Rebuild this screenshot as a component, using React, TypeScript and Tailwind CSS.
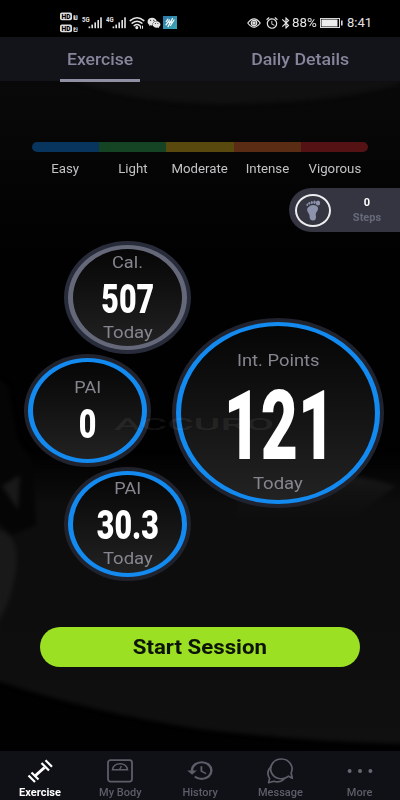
import type { ReactNode } from 'react';
import { MdAlarm, MdBluetooth, MdHistory } from 'react-icons/md';
import { FaWeixin } from 'react-icons/fa';

function Backdrop() {
  return (
    <svg className="absolute inset-0 -z-10" width="400" height="800" viewBox="0 0 400 800" aria-hidden="true">
      <defs>
        <linearGradient id="floor" x1="0" y1="0" x2="0" y2="1">
          <stop offset="0" stopColor="#0d0d0d" stopOpacity="0" />
          <stop offset="0.18" stopColor="#0d0d0d" />
          <stop offset="0.5" stopColor="#0d0d0d" />
          <stop offset="1" stopColor="#101010" />
        </linearGradient>
        <linearGradient id="top" x1="0" y1="0" x2="0" y2="1">
          <stop offset="0" stopColor="#090909" />
          <stop offset="1" stopColor="#010101" />
        </linearGradient>
        <linearGradient id="glow" x1="0" y1="0" x2="0" y2="1">
          <stop offset="0" stopColor="#1c1c1c" />
          <stop offset="1" stopColor="#0d0d0d" stopOpacity="0" />
        </linearGradient>
        <filter id="soft" x="-20%" y="-20%" width="140%" height="140%" colorInterpolationFilters="sRGB">
          <feGaussianBlur stdDeviation="2" />
        </filter>
      </defs>
      <rect width="400" height="800" fill="#010101" />
      <rect y="80" width="400" height="170" fill="url(#top)" />
      <path d="M70 78H400V84Q330 104 220 104Q120 102 70 78Z" fill="#101010" filter="url(#soft)" />
      <g filter="url(#soft)">
        <path d="M-5 450L200 455L405 452V744Q310 742 200 729Q90 712 -5 680Z" fill="url(#floor)" />
        <path d="M250 474Q330 466 396 486L340 526L230 530Z" fill="url(#glow)" />
        <path d="M-5 376L8 386L18 440L32 460L36 525L12 535L-5 520Z" fill="#050505" />
        <path d="M2 486L20 475L18 510Z" fill="#191919" />
        <path d="M-5 530Q16 530 17 560Q14 600 -5 626Z" fill="#191919" />
      </g>
    </svg>
  );
}

function Signal({ label }: { label: string }) {
  return (
    <svg width="21" height="14" viewBox="0 0 21 14" fill="#e4e4e4">
      <text x="0" y="6.4" fontSize="7" fontWeight="700" fontFamily="Roboto, sans-serif" textLength="7.6" lengthAdjust="spacingAndGlyphs">{label}</text>
      <rect x="6.6" y="10.5" width="1.6" height="1.7" />
      <rect x="9.4" y="8.6" width="1.6" height="3.6" />
      <rect x="12.4" y="6.4" width="1.6" height="5.8" />
      <rect x="15.4" y="4" width="1.6" height="8.2" />
      <rect x="18.2" y="1.3" width="1.6" height="10.9" />
    </svg>
  );
}

function HdBadge({ sim }: { sim: string }) {
  return (
    <svg width="19" height="9" viewBox="0 0 19 9" fontFamily="Roboto, sans-serif" fontWeight="900">
      <rect x="0" y="0.6" width="12" height="7.6" rx="1.8" fill="#dedede" />
      <text x="1.6" y="7" fontSize="7.2" fill="#000" textLength="9" lengthAdjust="spacingAndGlyphs">HD</text>
      <rect x="13.4" y="3" width="4.2" height="5" rx="1" fill="#d0d0d0" />
      <text x="14.3" y="7.3" fontSize="5" fill="#000">{sim}</text>
    </svg>
  );
}

function StatusBar() {
  return (
    <div className="flex h-[37px] items-start bg-black pl-[60px] text-[#e4e4e4]">
      <div className="mt-3 flex w-[19px] flex-col gap-[3px]">
        <HdBadge sim="1" />
        <HdBadge sim="2" />
      </div>
      <div className="mt-4 ml-[3px] flex gap-[3px]">
        <Signal label="5G" />
        <Signal label="4G" />
      </div>
      <svg className="mt-4 ml-[2px]" width="16" height="14" viewBox="0 0 16 14" fill="none" stroke="#e4e4e4" strokeWidth="1.5" strokeLinecap="round">
        <path d="M1.2 4.6Q8 -1 14.8 4.6M3.2 7.2Q8 3.3 12.8 7.2M5.2 9.6Q8 7.4 10.8 9.6" />
        <circle cx="7.8" cy="11.6" r="0.8" fill="#e4e4e4" />
        <path d="M11.5 10v2.2M13.5 10v2.2" strokeWidth="1.1" />
      </svg>
      <FaWeixin className="mt-[17px] ml-[2px] h-[12px] w-[14px]" />
      <svg className="mt-4 ml-[2px]" width="14" height="13" viewBox="0 0 14 13">
        <defs>
          <linearGradient id="app" x1="0" y1="0" x2="1" y2="1">
            <stop offset="0" stopColor="#2c78a8" />
            <stop offset="1" stopColor="#3ba8b4" />
          </linearGradient>
        </defs>
        <rect width="14" height="13" fill="url(#app)" />
        <path d="M3 8.8L6.5 4M5 10.6L9.5 2.5M7.5 9.5L11 4M3.2 5.5L5 3.2M5.4 6.2H9.6" stroke="#fff" strokeWidth="1.2" strokeLinecap="round" fill="none" />
      </svg>
      <svg className="mt-[18px] ml-[70px]" width="14" height="10" viewBox="0 0 14 10" fill="none" stroke="#e4e4e4" strokeWidth="1.2">
        <path d="M0.8 5Q7 -3.4 13.2 5Q7 13.4 0.8 5Z" />
        <circle cx="7" cy="5" r="2.7" />
        <circle cx="7" cy="5" r="1.1" fill="#e4e4e4" />
      </svg>
      <MdAlarm className="mt-4 ml-[4px] h-[14px] w-[14px]" />
      <MdBluetooth className="mt-4 h-[14px] w-[14px] shrink-0" />
      <span className="mt-[15px] -ml-px w-6 origin-left scale-x-[1.03] font-['Roboto',sans-serif] text-[13px] leading-4">88%</span>
      <svg className="mt-[18px] ml-1 shrink-0" width="23" height="10" viewBox="0 0 23 10">
        <rect x="0.5" y="0.5" width="19" height="9" fill="none" stroke="#d8d8d8" />
        <rect x="1.5" y="1.5" width="16" height="7" fill="#ececec" />
        <rect x="21" y="2.5" width="1.6" height="5" fill="#d8d8d8" />
      </svg>
      <span className="mt-[15px] ml-1 font-['Roboto',sans-serif] text-[13px] leading-4">8:41</span>
    </div>
  );
}

function Tabs() {
  return (
    <div className="grid h-11 grid-cols-2 bg-[#131419] text-center text-base font-medium text-[#85869c]">
      <div className="relative leading-[45px]">
        <span className="inline-block scale-x-[1.1]">Exercise</span>
        <span className="absolute inset-x-[60px] bottom-0 h-[3px] bg-[#8f90a3]" />
      </div>
      <div className="leading-[45px]">
        <span className="inline-block scale-x-[1.11]">Daily Details</span>
      </div>
    </div>
  );
}

const zones = [
  { name: 'Easy', color: 'bg-[#08355e]' },
  { name: 'Light', color: 'bg-[#154425]' },
  { name: 'Moderate', color: 'bg-[#59490e]' },
  { name: 'Intense', color: 'bg-[#5a2c14]' },
  { name: 'Vigorous', color: 'bg-[#551214]' },
];

function Zones() {
  return (
    <div className="mx-8 mt-[61px]">
      <div className="flex h-[10px] overflow-hidden rounded-full">
        {zones.map((z) => <div key={z.name} className={`flex-1 ${z.color}`} />)}
      </div>
      <div className="mt-2 grid h-[18px] grid-cols-5 text-center text-[12.5px] leading-[17px] text-[#c3c3c6]">
        {zones.map((z) => (
          <div key={z.name}><span className="inline-block scale-x-[1.06]">{z.name}</span></div>
        ))}
      </div>
    </div>
  );
}

function Steps() {
  return (
    <div className="mt-[10px] ml-[289px] flex h-11 items-center rounded-l-full bg-[#343541] pl-[6px]">
      <div className="flex h-[33px] w-9 shrink-0 items-center justify-center rounded-[50%] border-2 border-[#ededf0]">
        <svg width="16" height="21" viewBox="0 0 16 21" fill="#8d93ac">
          <ellipse cx="13" cy="3" rx="2.2" ry="2.5" />
          <ellipse cx="9.5" cy="2.2" rx="1.2" ry="1.7" />
          <ellipse cx="6.8" cy="2.5" rx="1.1" ry="1.5" />
          <ellipse cx="4.3" cy="3.3" rx="1" ry="1.4" />
          <ellipse cx="2.3" cy="4.7" rx="0.9" ry="1.2" />
          <path d="M3 7.4Q6 4.6 9.5 5.2Q13.5 6 13 9.3Q12.4 11.5 11 13Q10.4 14.5 11 16.5Q11.2 20.3 8.2 20.5Q5 20.6 4.7 17.5Q4.7 14.5 3 12.2Q1.2 9.2 3 7.4Z" />
        </svg>
      </div>
      <div className="flex flex-1 flex-col pr-[2px] pl-[5px] text-center text-[10px] leading-[15px] font-bold">
        <span className="scale-x-110 text-white">0</span>
        <span className="scale-x-[1.1] text-[#686a7b]">Steps</span>
      </div>
    </div>
  );
}

function Bubble({ shape, ring, children }: { shape: string; ring: string; children: ReactNode }) {
  return (
    <div className={`relative flex flex-col items-center rounded-[50%] text-[17px] leading-5 text-[#85868f] ${shape}`}>
      <div className={`absolute inset-0 -z-10 rounded-[50%] p-1 ${ring === 'gray' ? 'bg-[#282b39]' : 'bg-[#20232e]'}`}>
        <div
          className={`h-full w-full rounded-[50%] border-x-[5px] border-y-4 bg-linear-to-b from-[#060606] to-[#232323] bg-origin-border ${
            ring === 'gray' ? 'border-[#656879]' : 'border-[#128af0]'
          }`}
        />
      </div>
      {children}
    </div>
  );
}

function Bubbles() {
  return (
    <div className="relative z-0 mt-[9px] flex h-[341px] items-start pl-6">
      <svg className="absolute top-[172px] left-[114px]" width="162" height="22" viewBox="0 0 162 22">
        <text x="0" y="17" fontSize="16" fontWeight="500" fontFamily="Roboto, sans-serif" fill="#ffffff" fillOpacity="0.08" textLength="160" lengthAdjust="spacingAndGlyphs">ACCURO</text>
      </svg>
      <div className="flex w-[167px] shrink-0 flex-col">
        <Bubble ring="gray" shape="h-[113px] w-[127px] ml-10 pt-[11px]">
          <span className="scale-x-[1.07]">Cal.</span>
          <span className="h-[50px] scale-x-[0.76] text-[40px] leading-[55px] font-black text-white">507</span>
          <span className="scale-x-[1.09]">Today</span>
        </Bubble>
        <Bubble ring="blue" shape="h-[113px] w-[127px] pt-[23px]">
          <span className="scale-x-[1.06]">PAI</span>
          <span className="h-[50px] scale-x-[0.76] text-[40px] leading-[55px] font-black text-white">0</span>
        </Bubble>
        <Bubble ring="blue" shape="h-[114px] w-[127px] ml-10 pt-[11px]">
          <span className="scale-x-[1.06]">PAI</span>
          <span className="h-[50px] scale-x-[0.76] text-[40px] leading-[55px] font-black text-white">30.3</span>
          <span className="scale-x-[1.09]">Today</span>
        </Bubble>
      </div>
      <div className="mt-[77px] -ml-[19px]">
        <Bubble ring="blue" shape="h-[190px] w-[212px] pt-8">
          <span className="scale-x-[1.08]">Int. Points</span>
          <span className="mt-[10px] h-[93px] translate-x-px scale-x-[0.66] text-[97px] leading-[93px] font-black text-white">121</span>
          <span className="scale-x-[1.09]">Today</span>
        </Bubble>
      </div>
    </div>
  );
}

const navItems: { name: string; icon: ReactNode }[] = [
  {
    name: 'Exercise',
    icon: (
      <svg width="26" height="24" viewBox="0 0 26 24" fill="none" stroke="#fff" strokeWidth="2.2">
        <path d="M8.5 16.5L17.5 8.5" strokeWidth="3" />
        <path d="M4.5 13.5L11.5 20.5M1.5 16.5L8 23M14.5 4L22 11.5M18.5 1.2L25 7.8" />
      </svg>
    ),
  },
  {
    name: 'My Body',
    icon: (
      <svg width="26" height="24" viewBox="0 0 26 24" fill="none" stroke="#5d5e69" strokeWidth="1.8">
        <rect x="1" y="1.2" width="24" height="21.4" rx="2.5" />
        <path d="M5.5 10.7Q6.5 4.8 13 4.8Q19.5 4.8 20.5 10.7Z" strokeWidth="1.5" />
        <path d="M12.6 10.5L14.4 7" strokeWidth="1.4" />
      </svg>
    ),
  },
  {
    name: 'History',
    icon: <MdHistory className="h-[25px] w-[29px]" preserveAspectRatio="none" />,
  },
  {
    name: 'Message',
    icon: (
      <svg width="28" height="26" viewBox="0 0 28 26" fill="none" stroke="#5d5e69" strokeWidth="1.7" strokeLinejoin="round">
        <path d="M22.6 18.2A10.7 9.9 0 1 1 25.1 15L26.3 20.2Z" />
        <path d="M5.2 8.5Q-0.5 14 3.6 20.4L2.6 24.7L8 23.3Q13.5 25.3 18.3 21.2" />
      </svg>
    ),
  },
  {
    name: 'More',
    icon: (
      <svg width="26" height="24" viewBox="0 0 26 24" fill="#666772">
        <circle cx="2.6" cy="11.9" r="2" />
        <circle cx="13" cy="11.9" r="2" />
        <circle cx="23.4" cy="11.9" r="2" />
      </svg>
    ),
  },
];

function NavBar() {
  return (
    <nav className="grid h-[49px] grid-cols-5 bg-[#101116] text-[10px] leading-[14px] font-medium text-[#5d5e69]">
      {navItems.map((item, i) => (
        <div key={item.name} className={`flex flex-col items-center pt-[6px] ${i === 0 ? 'font-bold text-white' : ''}`}>
          <div className="flex h-[27px] items-center">{item.icon}</div>
          <span className="mt-[2px] scale-x-[1.1]">{item.name}</span>
        </div>
      ))}
    </nav>
  );
}

export default function App() {
  return (
    <div className="relative isolate flex h-[800px] w-[400px] flex-col overflow-hidden font-['Roboto',sans-serif]">
      <Backdrop />
      <StatusBar />
      <Tabs />
      <Zones />
      <Steps />
      <Bubbles />
      <button className="mx-10 mt-[45px] mb-auto h-[40px] rounded-full bg-[#9ce024] pt-px text-[19.5px] font-bold text-[#0c1408]">
        <span className="inline-block scale-x-[1.14]">Start Session</span>
      </button>
      <NavBar />
    </div>
  );
}
